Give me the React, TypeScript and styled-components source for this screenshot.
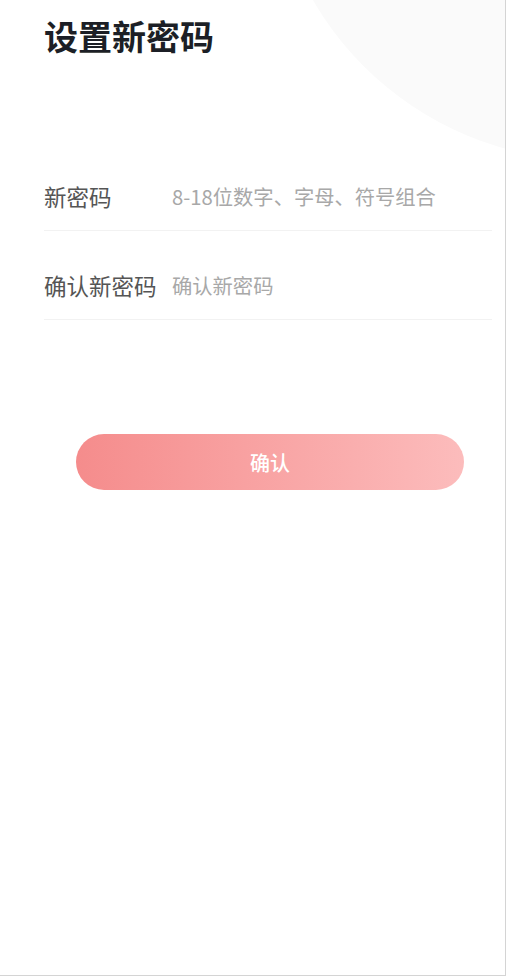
import React, { useState } from 'react';
import styled, { createGlobalStyle } from 'styled-components';

const GlobalStyle = createGlobalStyle`
  html, body {
    margin: 0;
    padding: 0;
    background: #ffffff;
  }
  body {
    font-family: "Noto Sans CJK SC", "Noto Sans", sans-serif;
  }
`;

export default function App() {
  const [password, setPassword] = useState('');
  const [confirm, setConfirm] = useState('');

  return (
    <Page>
      <GlobalStyle />
      <Decor />
      <Title>设置新密码</Title>
      <Form onSubmit={(e) => e.preventDefault()}>
        <Row>
          <Label>新密码</Label>
          <Input
            type="password"
            value={password}
            onChange={(e) => setPassword(e.target.value)}
            placeholder="8-18位数字、字母、符号组合"
          />
        </Row>
        <Row>
          <Label>确认新密码</Label>
          <Input
            type="password"
            value={confirm}
            onChange={(e) => setConfirm(e.target.value)}
            placeholder="确认新密码"
          />
        </Row>
        <Button type="submit">确认</Button>
      </Form>
    </Page>
  );
}

// Styled components

const Page = styled.div`
  position: relative;
  overflow: hidden;
  box-sizing: border-box;
  width: 506px;
  height: 976px;
  padding: 14px 13px 0 44px;
  background: #ffffff;
  border-right: 1px solid #d4d4d4;
  border-bottom: 1px solid #d4d4d4;
`;

// faint circle in the top right corner
const Decor = styled.div`
  position: absolute;
  left: 270px;
  top: -480px;
  width: 640px;
  height: 640px;
  border-radius: 50%;
  background: #fafafa;
`;

const Title = styled.h1`
  position: relative;
  margin: 0;
  font-size: 34px;
  line-height: 44px;
  font-weight: 700;
  color: #1c1f26;
`;

const Form = styled.form`
  position: relative;
  display: flex;
  flex-direction: column;
  margin-top: 84px;
`;

const Row = styled.div`
  display: flex;
  align-items: center;
  height: 89px;
  box-sizing: border-box;
  padding: 43px 0 24px;
  border-bottom: 1px solid #f2f2f2;
`;

const Label = styled.span`
  flex: 0 0 128px;
  font-size: 22.5px;
  line-height: 22px;
  color: #555555;
`;

const Input = styled.input`
  flex: 1;
  min-width: 0;
  border: none;
  outline: none;
  padding: 0;
  background: transparent;
  font-family: "Noto Sans CJK SC", "Noto Sans", sans-serif;
  font-size: 20.3px;
  line-height: 22px;
  color: #333333;

  &::placeholder {
    color: #a8a8a8;
  }
`;

const Button = styled.button`
  margin: 114px 0 0 32px;
  width: 388px;
  height: 56px;
  border: none;
  border-radius: 28px;
  background: linear-gradient(90deg, #f58c8c, #fcbcbc);
  color: #ffffff;
  font-family: "Noto Sans CJK SC", "Noto Sans", sans-serif;
  font-size: 20px;
  font-weight: 500;
  cursor: pointer;
`;
